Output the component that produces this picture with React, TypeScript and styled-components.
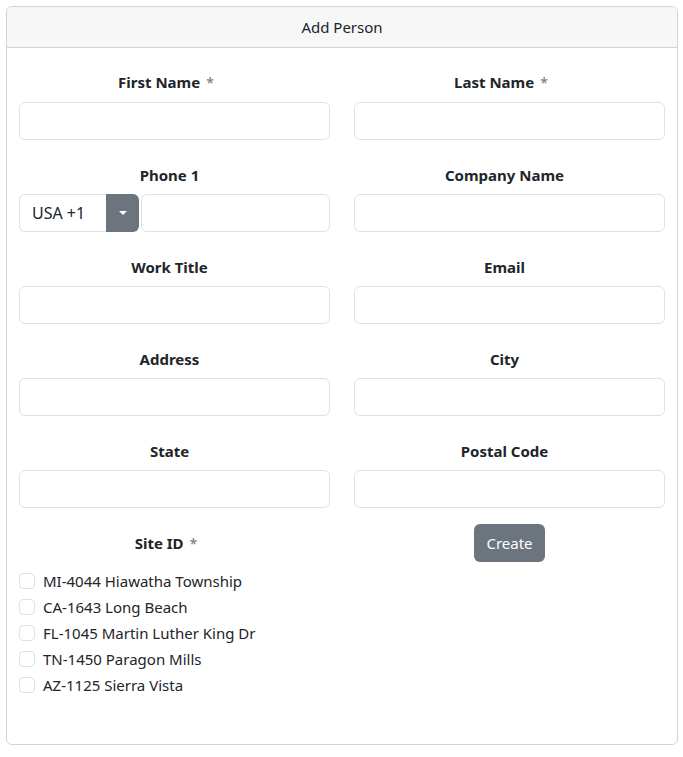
import styled, { createGlobalStyle } from 'styled-components'

const GlobalStyle = createGlobalStyle`
  body {
    margin: 0;
    background: #fff;
    font-family: 'Noto Sans', 'Open Sans', sans-serif;
    color: #212529;
  }
`

const Page = styled.div`
  padding: 6px 5px 12px 6px;
`

const Card = styled.section`
  border: 1px solid #d3d3d3;
  border-radius: 6px;
  background: #fff;
  overflow: hidden;
`

const CardHeader = styled.header`
  height: 40px;
  display: flex;
  align-items: center;
  justify-content: center;
  background: #f7f7f7;
  border-bottom: 1px solid #d3d3d3;
  font-size: 15px;
  color: #212529;
`

const CardBody = styled.form`
  display: grid;
  grid-template-columns: 1fr 1fr;
  padding: 22px 0 46px;
  row-gap: 23px;
`

const Field = styled.div`
  padding: 0 12px;
  display: flex;
  flex-direction: column;
`

const Label = styled.label`
  display: block;
  text-align: center;
  font-weight: 700;
  font-size: 15px;
  line-height: 24px;
  margin-bottom: 7px;
  padding-right: 10px;
`

const Required = styled.span`
  font-weight: 400;
  color: #6c757d;
  font-size: 14px;
  margin-left: 6px;
  padding-right: 7px;
`

const Input = styled.input`
  box-sizing: border-box;
  height: 38px;
  width: 100%;
  border: 1px solid #dee2e6;
  border-radius: 6px;
  background: #fff;
  font: inherit;
  padding: 0 12px;
`

const PhoneGroup = styled.div`
  display: flex;
  gap: 2px;
  height: 38px;
`

const CountrySelect = styled.div`
  display: flex;
  width: 120px;
  flex: none;
`

const CountryValue = styled.div`
  box-sizing: border-box;
  flex: 1;
  display: flex;
  align-items: center;
  padding-left: 12px;
  border: 1px solid #dee2e6;
  border-right: none;
  border-radius: 6px 0 0 6px;
  font-size: 16px;
`

const Toggle = styled.button`
  width: 33px;
  border: none;
  background: #6c757d;
  border-radius: 0 6px 6px 0;
  display: flex;
  align-items: center;
  justify-content: center;
  padding: 0;

  &::after {
    content: '';
    border-top: 4px solid #fff;
    border-left: 4px solid transparent;
    border-right: 4px solid transparent;
  }
`

const CheckList = styled.div`
  display: flex;
  flex-direction: column;
  margin-top: 5px;
`

const CheckRow = styled.label`
  display: flex;
  align-items: center;
  gap: 8px;
  height: 26px;
  font-size: 15px;
`

const Box = styled.span`
  box-sizing: border-box;
  width: 16px;
  height: 16px;
  border: 1px solid #dee2e6;
  border-radius: 4px;
  flex: none;
`

const ActionCell = styled.div`
  display: flex;
  justify-content: center;
  align-items: flex-start;
  padding: 0 12px;
`

const Button = styled.button`
  height: 38px;
  margin-top: -7px;
  padding: 0 12px;
  border: none;
  border-radius: 6px;
  background: #6c757d;
  color: #fff;
  font: inherit;
  font-size: 15px;
`

const sites = [
  'MI-4044 Hiawatha Township',
  'CA-1643 Long Beach',
  'FL-1045 Martin Luther King Dr',
  'TN-1450 Paragon Mills',
  'AZ-1125 Sierra Vista',
]

const TextField = ({ label, required }: { label: string; required?: boolean }) => (
  <Field>
    <Label>
      {label}
      {required && <Required>*</Required>}
    </Label>
    <Input type="text" />
  </Field>
)

export default function App() {
  return (
    <Page>
      <GlobalStyle />
      <Card>
        <CardHeader>Add Person</CardHeader>
        <CardBody>
          <TextField label="First Name" required />
          <TextField label="Last Name" required />
          <Field>
            <Label>Phone 1</Label>
            <PhoneGroup>
              <CountrySelect>
                <CountryValue>USA +1</CountryValue>
                <Toggle type="button" aria-label="Country" />
              </CountrySelect>
              <Input type="tel" />
            </PhoneGroup>
          </Field>
          <TextField label="Company Name" />
          <TextField label="Work Title" />
          <TextField label="Email" />
          <TextField label="Address" />
          <TextField label="City" />
          <TextField label="State" />
          <TextField label="Postal Code" />
          <Field>
            <Label>
              Site ID<Required>*</Required>
            </Label>
            <CheckList>
              {sites.map((s) => (
                <CheckRow key={s}>
                  <Box />
                  {s}
                </CheckRow>
              ))}
            </CheckList>
          </Field>
          <ActionCell>
            <Button type="button">Create</Button>
          </ActionCell>
        </CardBody>
      </Card>
    </Page>
  )
}
